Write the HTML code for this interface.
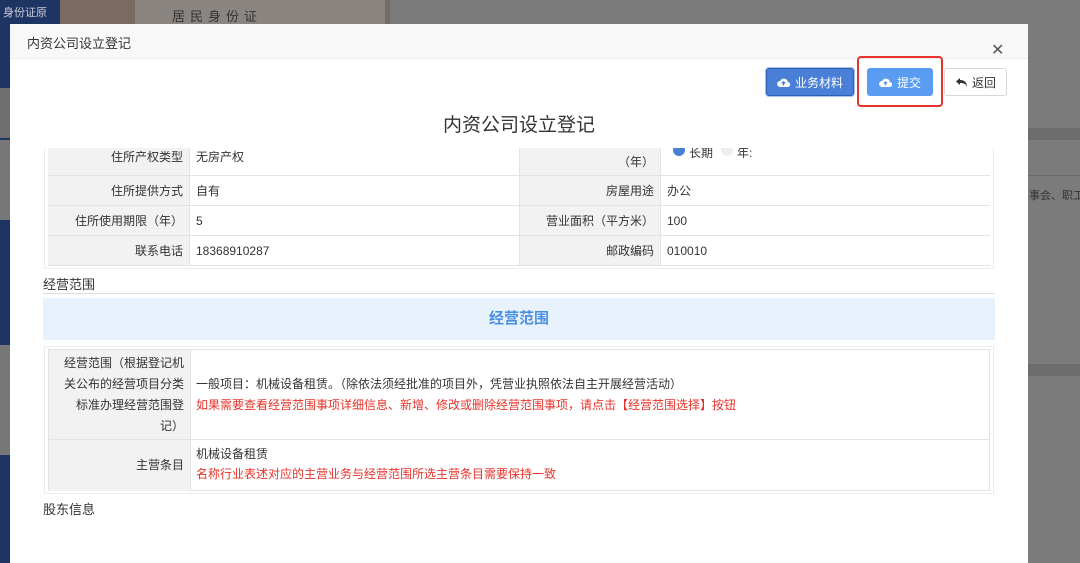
<!DOCTYPE html>
<html><head><meta charset="utf-8"><style>
*{margin:0;padding:0;box-sizing:border-box}
body{width:1080px;height:563px;overflow:hidden;position:relative;background:#7b7b7b;font-family:"Liberation Sans","Noto Sans CJK SC",sans-serif;font-size:12px;color:#333}
.a{position:absolute}
.lbl{background:#f2f2f2;text-align:right;padding-right:6px}
.c{position:absolute;border-bottom:1px solid #e3e3e3;display:flex;align-items:center;font-size:12px;color:#333}
.btn{position:absolute;height:28px;border-radius:3px;display:flex;align-items:center;justify-content:center;font-size:12px}
</style></head><body>
<!-- background -->
<div class="a" style="left:0;top:0;width:10px;height:563px;background:#1e3563"></div>
<div class="a" style="left:0;top:0;width:60px;height:24px;background:#1e3563"></div>
<div class="a" style="left:3px;top:4px;color:#ccd;font-size:11px">身份证原</div>
<div class="a" style="left:0;top:88px;width:10px;height:50px;background:#6e6e6e"></div>
<div class="a" style="left:0;top:140px;width:10px;height:80px;background:#777"></div>
<div class="a" style="left:0;top:345px;width:10px;height:110px;background:#777"></div>
<div class="a" style="left:60px;top:0;width:330px;height:24px;background:#7a6a60"></div>
<div class="a" style="left:135px;top:0;width:250px;height:24px;background:#8a8580"></div>
<div class="a" style="left:172px;top:6px;color:#333;font-size:13px;letter-spacing:5px">居民身份证</div>
<div class="a" style="left:1028px;top:128px;width:52px;height:12px;background:#6c6c6c"></div>
<div class="a" style="left:1028px;top:175px;width:52px;height:1px;background:#6a6a6a"></div>
<div class="a" style="left:1029px;top:187px;color:#333;font-size:11px;white-space:nowrap">事会、职工</div>
<div class="a" style="left:1028px;top:364px;width:52px;height:12px;background:#6c6c6c"></div>
<!-- modal -->
<div class="a" style="left:10px;top:24px;width:1018px;height:539px;background:#fff"></div>
<div class="a" style="left:10px;top:24px;width:1018px;height:35px;background:#f8f8f8;border-bottom:1px solid #eee"></div>
<div class="a" style="left:27px;top:33px;font-size:13px;color:#333">内资公司设立登记</div>
<div class="a" style="left:991px;top:40px;font-size:16px;color:#555">✕</div>
<!-- buttons -->
<div class="btn" style="left:766px;top:68px;width:88px;background:#4a7fd8;border:1px solid #2f5fb0;color:#fff;box-shadow:0 0 0 1px #a9c4ee">
<svg width="13" height="11" viewBox="0 0 13 11" style="margin-right:5px"><path d="M3 10h7.5a2.5 2.5 0 0 0 .3-5A4 4 0 0 0 3.2 4 3 3 0 0 0 3 10z" fill="#fff"/><path d="M6.5 8.5V5M4.8 6.6l1.7-1.8 1.7 1.8" stroke="#4a7fd8" stroke-width="1.3" fill="none"/></svg>业务材料</div>
<div class="a" style="left:857px;top:56px;width:86px;height:51px;border:2px solid #e8332a;border-radius:4px"></div>
<div class="btn" style="left:867px;top:68px;width:66px;background:#5b9cf3;color:#fff">
<svg width="13" height="11" viewBox="0 0 13 11" style="margin-right:5px"><path d="M3 10h7.5a2.5 2.5 0 0 0 .3-5A4 4 0 0 0 3.2 4 3 3 0 0 0 3 10z" fill="#fff"/><path d="M6.5 8.5V5M4.8 6.6l1.7-1.8 1.7 1.8" stroke="#5b9cf3" stroke-width="1.3" fill="none"/></svg>提交</div>
<div class="btn" style="left:944px;top:68px;width:63px;background:#fff;border:1px solid #d8d8d8;color:#333">
<svg width="13" height="11" viewBox="0 0 13 11" style="margin-right:4px"><path d="M5 1L1 4.5 5 8V6c4 0 6 1 7 4 0-4-2-7-7-7z" fill="#333"/></svg>返回</div>
<div class="a" style="left:0;width:1038px;top:110px;text-align:center;font-size:19px;color:#333">内资公司设立登记</div>
<!-- table 1 -->
<div class="a" style="left:44px;top:148px;width:950px;height:121px;border:1px solid #ececec;border-top:none"></div>
<div class="a" style="left:48px;top:148px;width:942px;height:118px;overflow:hidden">
<div class="c lbl" style="left:0;top:-10px;width:141px;height:38px;justify-content:flex-end">住所产权类型</div>
<div class="c" style="left:141px;top:-10px;width:330px;height:38px;padding-left:6px;border-left:1px solid #e3e3e3">无房产权</div>
<div class="c lbl" style="left:471px;top:-10px;width:141px;height:38px;justify-content:flex-end;border-left:1px solid #e3e3e3;padding-top:10px">（年）</div>
<div class="c" style="left:612px;top:-10px;width:330px;height:38px;padding-left:12px;border-left:1px solid #e3e3e3;align-items:flex-start;padding-top:6px"><span style="display:inline-block;width:12px;height:12px;border-radius:6px;background:#4a7fd8;margin-right:4px"></span>长期 <span style="display:inline-block;width:12px;height:12px;border-radius:6px;background:#eee;margin:0 4px 0 8px"></span>年:</div>
<div class="c lbl" style="left:0;top:28px;width:141px;height:30px;justify-content:flex-end">住所提供方式</div>
<div class="c" style="left:141px;top:28px;width:330px;height:30px;padding-left:6px;border-left:1px solid #e3e3e3">自有</div>
<div class="c lbl" style="left:471px;top:28px;width:141px;height:30px;justify-content:flex-end;border-left:1px solid #e3e3e3">房屋用途</div>
<div class="c" style="left:612px;top:28px;width:330px;height:30px;padding-left:6px;border-left:1px solid #e3e3e3">办公</div>
<div class="c lbl" style="left:0;top:58px;width:141px;height:30px;justify-content:flex-end">住所使用期限（年）</div>
<div class="c" style="left:141px;top:58px;width:330px;height:30px;padding-left:6px;border-left:1px solid #e3e3e3">5</div>
<div class="c lbl" style="left:471px;top:58px;width:141px;height:30px;justify-content:flex-end;border-left:1px solid #e3e3e3">营业面积（平方米）</div>
<div class="c" style="left:612px;top:58px;width:330px;height:30px;padding-left:6px;border-left:1px solid #e3e3e3">100</div>
<div class="c lbl" style="left:0;top:88px;width:141px;height:30px;justify-content:flex-end">联系电话</div>
<div class="c" style="left:141px;top:88px;width:330px;height:30px;padding-left:6px;border-left:1px solid #e3e3e3">18368910287</div>
<div class="c lbl" style="left:471px;top:88px;width:141px;height:30px;justify-content:flex-end;border-left:1px solid #e3e3e3">邮政编码</div>
<div class="c" style="left:612px;top:88px;width:330px;height:30px;padding-left:6px;border-left:1px solid #e3e3e3">010010</div>
</div>
<!-- section -->
<div class="a" style="left:43px;top:274px;font-size:13px;color:#333">经营范围</div>
<div class="a" style="left:43px;top:293px;width:952px;height:1px;background:#ddd"></div>
<div class="a" style="left:43px;top:298px;width:952px;height:42px;background:#e8f2fc;text-align:center;line-height:42px;font-size:15px;font-weight:bold;color:#4a90e2">经营范围</div>
<!-- table 2 -->
<div class="a" style="left:44px;top:346px;width:950px;height:148px;border:1px solid #ececec"></div>
<div class="a" style="left:48px;top:349px;width:942px;height:142px;border:1px solid #e3e3e3">
<div class="a lbl" style="left:0;top:0;width:141px;height:90px;border-bottom:1px solid #e3e3e3;line-height:21px;padding-top:3px;font-size:12px;white-space:nowrap">经营范围（根据登记机<br>关公布的经营项目分类<br>标准办理经营范围登<br>记）</div>
<div class="a" style="left:141px;top:0;width:800px;height:90px;border-left:1px solid #e3e3e3;border-bottom:1px solid #e3e3e3;padding:24px 0 0 5px;line-height:21px">一般项目：机械设备租赁。（除依法须经批准的项目外，凭营业执照依法自主开展经营活动）<br><span style="color:#e8332a">如果需要查看经营范围事项详细信息、新增、修改或删除经营范围事项，请点击【经营范围选择】按钮</span></div>
<div class="a lbl" style="left:0;top:90px;width:141px;height:51px;line-height:51px">主营条目</div>
<div class="a" style="left:141px;top:90px;width:800px;height:51px;border-left:1px solid #e3e3e3;padding:4px 0 0 5px;line-height:20px">机械设备租赁<br><span style="color:#e8332a">名称行业表述对应的主营业务与经营范围所选主营条目需要保持一致</span></div>
</div>
<div class="a" style="left:43px;top:499px;font-size:13px;color:#333">股东信息</div>
</body></html>
